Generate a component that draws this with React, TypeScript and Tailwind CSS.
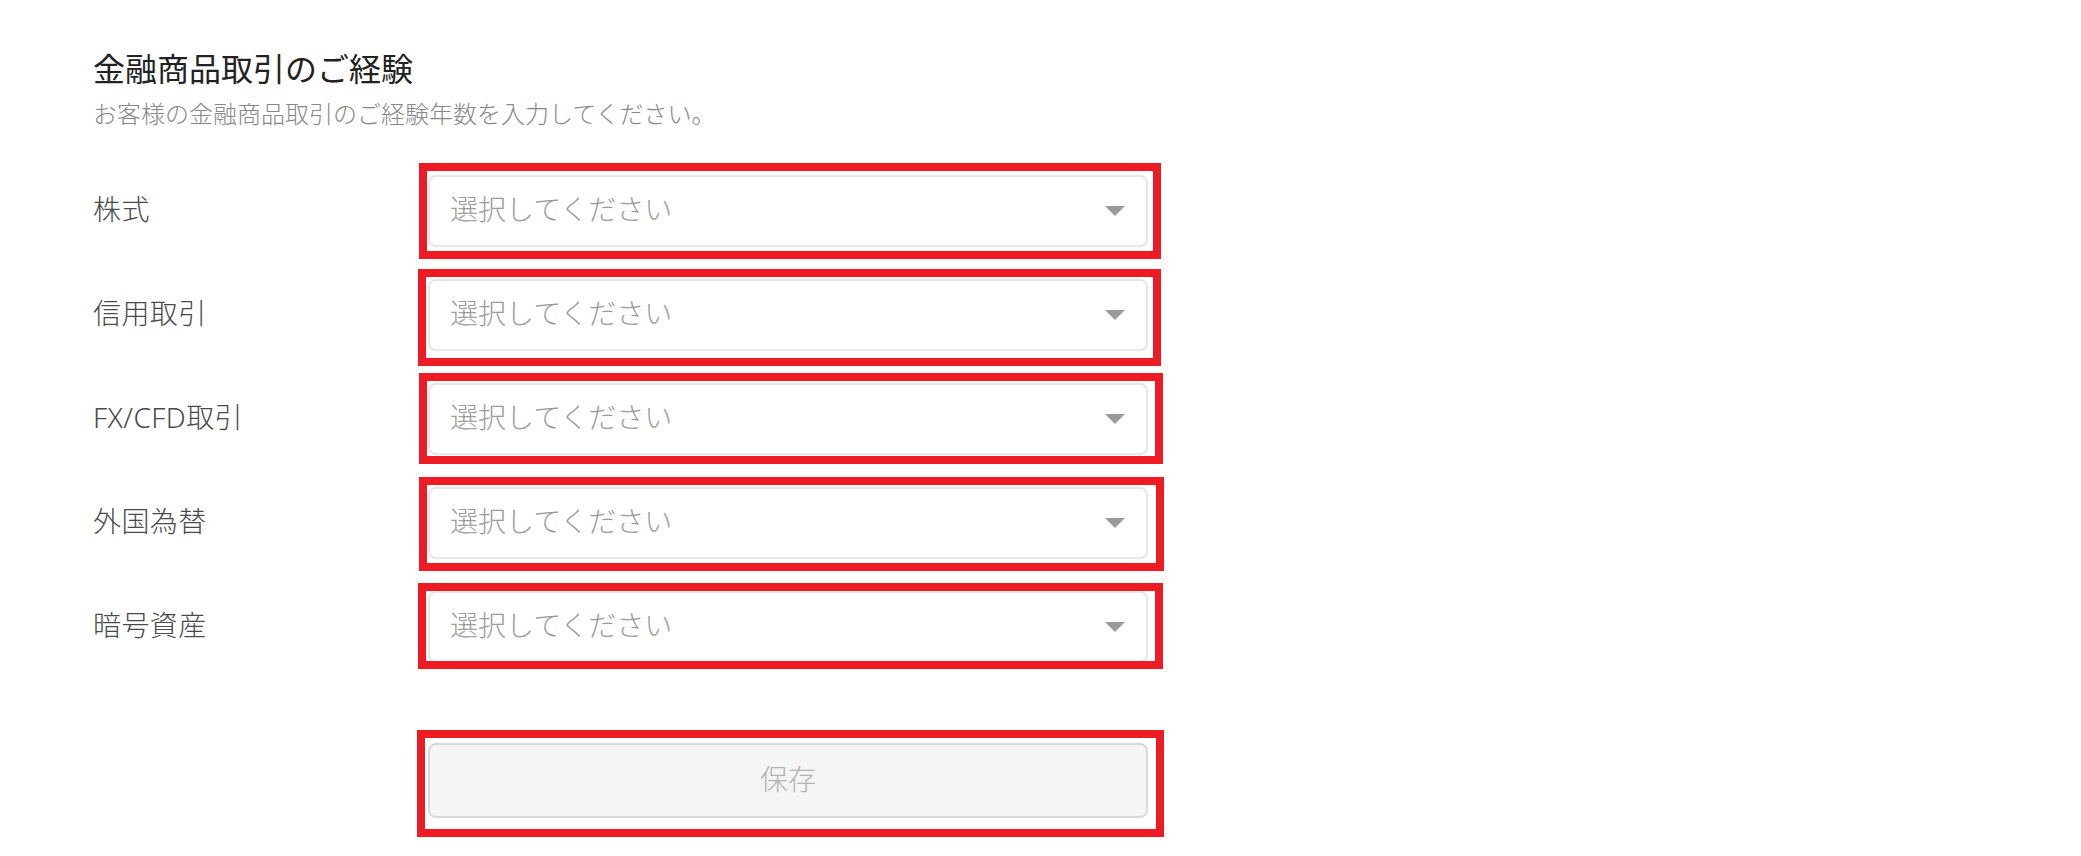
import React from "react";

const rows = [
  { label: "株式", box: "-left-[9px] -top-[12px] -right-[13px] -bottom-[12px]" },
  { label: "信用取引", box: "-left-[10px] -top-[10px] -right-[13px] -bottom-[15px]" },
  { label: "FX/CFD取引", box: "-left-[9px] -top-[10px] -right-[15px] -bottom-[9px]" },
  { label: "外国為替", box: "-left-[9px] -top-[10px] -right-[16px] -bottom-[12px]" },
  { label: "暗号資産", box: "-left-[10px] -top-[8px] -right-[15px] -bottom-[6px]" },
];

const font = { fontFamily: '"Noto Sans", "Noto Sans CJK JP", sans-serif' };

export default function App() {
  return (
    <div className="w-[2081px] h-[856px] bg-white overflow-hidden" style={font}>
      <div className="pl-[93px] pt-[47px]">
        <h1 className="text-[32px] leading-[44px] text-[#222222] font-normal">金融商品取引のご経験</h1>
        <p className="mt-[5px] text-[24px] leading-[36px] text-[#888888] font-light">
          お客様の金融商品取引のご経験年数を入力してください。
        </p>
        <div className="mt-[43px] flex flex-col gap-[32px]">
          {rows.map((r) => (
            <div key={r.label} className="flex items-center">
              <div className="w-[335px] text-[28px] leading-[40px] text-[#4a4a4a] font-light pb-[4px] tracking-[0.4px]">{r.label}</div>
              <div className="relative w-[720px]">
                <div className="h-[72px] rounded-[8px] border-2 border-[#e6e6e6] bg-white flex items-center justify-between pl-[20px] pr-[20px]">
                  <span className="text-[28px] text-[#9c9c9c] font-light pb-[4px]">選択してください</span>
                  <svg width="20" height="10" viewBox="0 0 20 10" className="mr-[1px]">
                    <polygon points="0,0 20,0 10,10" fill="#9a9a9a" />
                  </svg>
                </div>
                <div className={`absolute ${r.box} border-[8px] border-[#ed1c24] pointer-events-none`} />
              </div>
            </div>
          ))}
        </div>
        <div className="mt-[80px] flex">
          <div className="w-[335px]" />
          <div className="relative w-[720px]">
            <button className="w-full h-[75px] rounded-[8px] border-2 border-[#d9d9d9] bg-[#f5f5f5] text-[28px] text-[#b3b3b3] font-light pb-[4px]">
              保存
            </button>
            <div className="absolute -left-[11px] -top-[13px] -right-[16px] -bottom-[19px] border-[8px] border-[#ed1c24] pointer-events-none" />
          </div>
        </div>
      </div>
    </div>
  );
}
